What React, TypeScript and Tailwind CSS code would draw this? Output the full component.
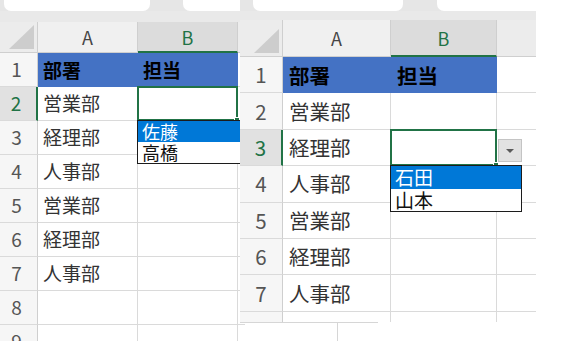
type Cfg = {
  text: string;
  tabA: string;
  tabB: string;
  band: string;
  head: string;
  row: string;
  rh: string;
  ca: string;
  cb: string;
  rows: number;
  sel: number;
  list: string[];
  listCls: string;
  itemCls: string;
  pad: string;
  button: boolean;
};

const depts = ["営業部", "経理部", "人事部", "営業部", "経理部", "人事部"];

const left: Cfg = {
  text: "text-[19px]",
  tabA: "ml-[4px] w-[146px]",
  tabB: "ml-[33px] flex-1",
  band: "h-[11px]",
  head: "h-[31px]",
  row: "h-[34px]",
  rh: "w-[38px] pr-[4px]",
  ca: "w-[100px]",
  cb: "w-[100px]",
  rows: 9,
  sel: 2,
  list: ["佐藤", "高橋"],
  listCls: "w-[120px]",
  itemCls: "h-[21px] leading-[21px] text-[18px]",
  pad: "pl-[5px]",
  button: false,
};

const right: Cfg = {
  text: "text-[20.5px]",
  tabA: "ml-[13px] w-[150px]",
  tabB: "ml-[34px] flex-1",
  band: "h-[9px]",
  head: "h-[37px]",
  row: "h-[36.4px]",
  rh: "w-[43px]",
  ca: "w-[108px]",
  cb: "w-[106px]",
  rows: 8,
  sel: 3,
  list: ["石田", "山本"],
  listCls: "w-[132px]",
  itemCls: "h-[22.5px] leading-[22.5px] text-[19px]",
  pad: "pl-[6px]",
  button: true,
};

function Selected({ cfg }: { cfg: Cfg }) {
  return (
    <>
      <div className="absolute -left-px -top-px -right-px -bottom-px border-2 border-[#217346] z-10" />
      <div className="absolute -right-[3px] -bottom-[3px] w-[6px] h-[6px] bg-[#217346] border border-white z-20" />
      {cfg.button && (
        <div className="absolute left-[calc(100%+2px)] bottom-[3px] w-[24px] h-[23px] bg-[#e2e2e2] border border-[#c4c4c4] flex items-center justify-center z-20">
          <div className="w-0 h-0 border-l-[4px] border-r-[4px] border-t-[4px] border-l-transparent border-r-transparent border-t-[#5a5a5a]" />
        </div>
      )}
      <div className={`absolute top-full -left-px z-30 bg-white border border-[#1c1c1c] ${cfg.listCls}`}>
        {cfg.list.map((name, i) => (
          <div
            key={name}
            className={`pl-[4px] ${cfg.itemCls} ${
              i === 0 ? "bg-[#0078d7] text-white" : "text-[#111]"
            }`}
          >
            {name}
          </div>
        ))}
      </div>
    </>
  );
}

function Sheet({ cfg }: { cfg: Cfg }) {
  const rows = Array.from({ length: cfg.rows }, (_, i) => i + 1);
  return (
    <div className={`flex flex-col w-full h-full bg-white font-['Noto_Sans_CJK_JP',sans-serif] ${cfg.text}`}>
      {/* tab strip */}
      <div className="flex h-[11px] shrink-0 bg-[#e6e6e6]">
        <div className={`h-full bg-white rounded-b-[7px] ${cfg.tabA}`} />
        <div className={`h-full bg-white rounded-bl-[7px] ${cfg.tabB}`} />
      </div>
      <div className={`shrink-0 bg-[#e9e9e9] ${cfg.band}`} />

      {/* column headers */}
      <div className={`flex shrink-0 text-[18px] leading-none ${cfg.head}`}>
        <div className={`relative shrink-0 bg-[#ececec] border-r border-b border-[#cfcfcf] ${cfg.rh} pr-0`}>
          <div className="absolute right-[3px] bottom-[3px] w-[25px] h-[24px] bg-[#cdcdcd] [clip-path:polygon(100%_0,100%_100%,0_100%)]" />
        </div>
        <div className={`shrink-0 flex items-center justify-center bg-[#f0f0f0] text-[#444] border-r border-b border-[#cfcfcf] ${cfg.ca}`}>
          A
        </div>
        <div className={`shrink-0 flex items-center justify-center bg-[#dcdcdc] text-[#217346] border-r border-[#cfcfcf] border-b-2 border-b-[#217346] ${cfg.cb}`}>
          B
        </div>
        <div className="flex-1 bg-[#ececec] border-b border-[#cfcfcf]" />
      </div>

      {/* rows */}
      {rows.map((r) => {
        const isSel = r === cfg.sel;
        const head = r === 1;
        return (
          <div key={r} className={`flex shrink-0 ${cfg.row}`}>
            <div
              className={`shrink-0 flex items-center justify-center border-b border-[#dadada] ${cfg.rh} ${
                isSel
                  ? "bg-[#e1e1e1] text-[#217346] border-r-2 border-r-[#217346]"
                  : "bg-[#f6f6f6] text-[#555] border-r border-r-[#cfcfcf]"
              }`}
            >
              {r}
            </div>
            <div
              className={`shrink-0 flex items-center ${cfg.pad} ${cfg.ca} ${
                head
                  ? "bg-[#4472c4] text-black font-bold"
                  : "border-r border-b border-[#dadada] text-[#333]"
              }`}
            >
              {head ? "部署" : depts[r - 2] ?? ""}
            </div>
            <div
              className={`relative shrink-0 flex items-center ${cfg.pad} ${cfg.cb} ${
                head ? "bg-[#4472c4] text-black font-bold" : "border-r border-b border-[#dadada]"
              }`}
            >
              {head ? "担当" : ""}
              {isSel && <Selected cfg={cfg} />}
            </div>
            <div className="flex-1 border-b border-[#dadada]" />
          </div>
        );
      })}
    </div>
  );
}

export default function App() {
  return (
    <div className="relative w-[581px] h-[341px] bg-white overflow-hidden">
      <div className="absolute left-0 top-0 w-[245px] h-[341px] overflow-hidden z-0">
        <Sheet cfg={left} />
      </div>
      <div className="absolute left-[240px] top-0 w-[296px] h-[322px] overflow-hidden z-10">
        <Sheet cfg={right} />
      </div>
      <div className="absolute left-[240px] top-[322px] w-[138px] border-t border-[#d6d6d6] z-20" />
      <div className="absolute left-[337px] top-[322px] h-[19px] border-l border-[#d6d6d6] z-20" />
    </div>
  );
}
